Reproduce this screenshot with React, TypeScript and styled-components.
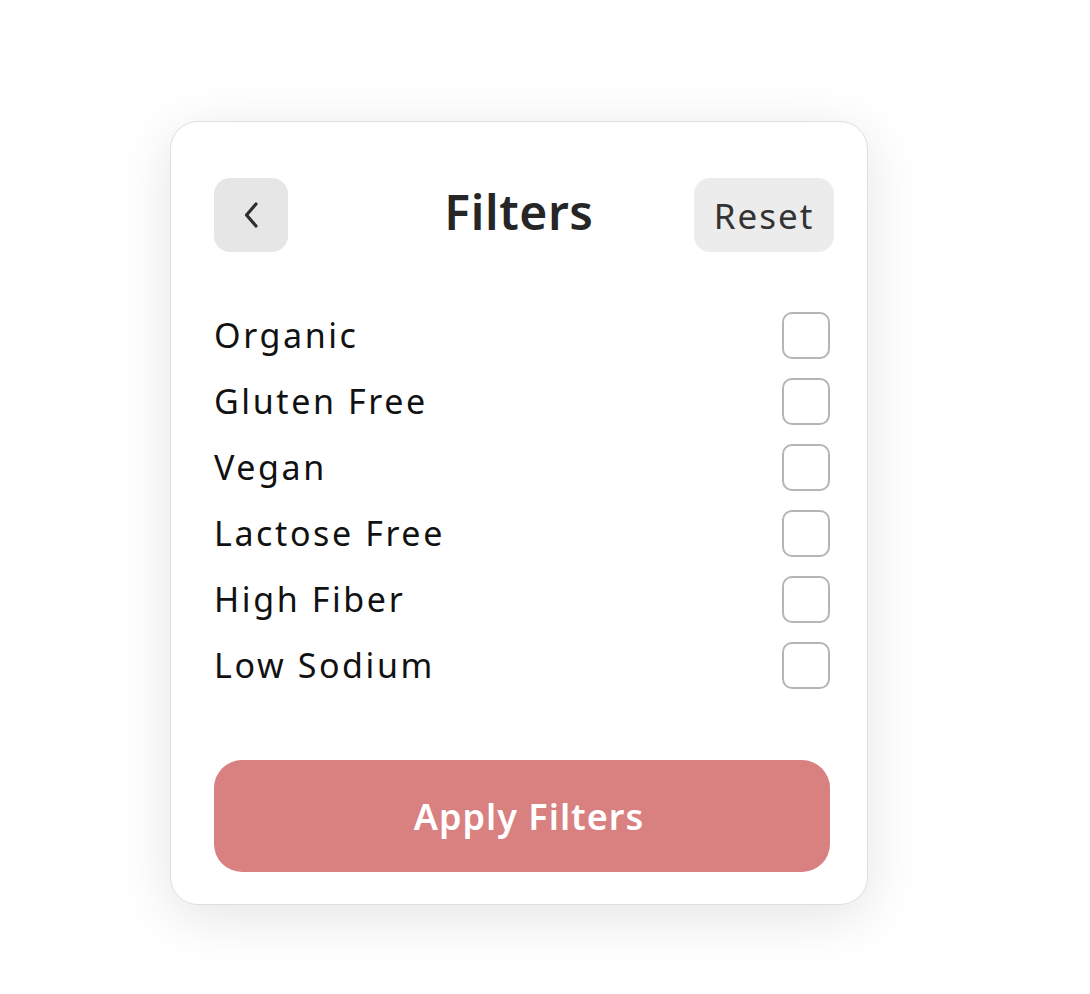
import React from "react";
import styled, { createGlobalStyle } from "styled-components";

const GlobalStyle = createGlobalStyle`
  *, *::before, *::after {
    box-sizing: border-box;
  }

  body {
    margin: 0;
    background: #ffffff;
    font-family: "Noto Sans", "Open Sans", sans-serif;
  }
`;

const Page = styled.div`
  min-height: 994px;
  padding: 121px 0 0 170px;
`;

const Card = styled.div`
  width: 698px;
  padding: 56px 37px 32px 43px;
  background: #ffffff;
  border: 1px solid #e2dddd;
  border-radius: 28px;
  box-shadow: 0 12px 56px rgba(0, 0, 0, 0.11);
`;

const Header = styled.div`
  display: grid;
  grid-template-columns: 1fr auto 1fr;
  align-items: center;
  margin-right: -4px;
`;

const BackButton = styled.button`
  justify-self: start;
  width: 74px;
  height: 74px;
  display: flex;
  align-items: center;
  justify-content: center;
  border: none;
  border-radius: 16px;
  background: #e6e6e6;
  padding: 0;
  cursor: pointer;
`;

const Title = styled.h1`
  margin: 0 10px 6px 0;
  font-size: 48px;
  font-weight: 600;
  letter-spacing: 0.6px;
  color: #262626;
  line-height: 1;
`;

const ResetButton = styled.button`
  justify-self: end;
  width: 140px;
  height: 74px;
  border: none;
  border-radius: 16px;
  background: #ececec;
  color: #333333;
  font-family: inherit;
  font-size: 35px;
  letter-spacing: 2px;
  cursor: pointer;
`;

const List = styled.div`
  display: flex;
  flex-direction: column;
  gap: 19px;
  margin-top: 60px;
`;

const Row = styled.label`
  display: flex;
  align-items: center;
  justify-content: space-between;
  height: 47px;
  cursor: pointer;
`;

const Label = styled.span`
  font-size: 34px;
  letter-spacing: 2.6px;
  color: #111111;
  margin-top: -2px;
`;

const Box = styled.span`
  width: 48px;
  height: 47px;
  border: 2px solid #b5b5b5;
  border-radius: 10px;
  background: #ffffff;
`;

const ApplyButton = styled.button`
  display: block;
  width: 100%;
  height: 112px;
  margin-top: 71px;
  padding: 0 0 0 14px;
  border: none;
  border-radius: 28px;
  background: #d98080;
  color: #ffffff;
  font-family: inherit;
  font-size: 36px;
  font-weight: 600;
  letter-spacing: 1px;
  cursor: pointer;
`;

const filters = [
  "Organic",
  "Gluten Free",
  "Vegan",
  "Lactose Free",
  "High Fiber",
  "Low Sodium",
];

const App: React.FC = () => {
  return (
    <>
      <GlobalStyle />
      <Page>
        <Card>
          <Header>
            <BackButton aria-label="Back">
              <svg width="16" height="28" viewBox="0 0 16 28" fill="none">
                <path
                  d="M13 3 L3.5 14 L13 25"
                  stroke="#2e2e2e"
                  strokeWidth="3.2"
                  strokeLinecap="round"
                  strokeLinejoin="round"
                />
              </svg>
            </BackButton>
            <Title>Filters</Title>
            <ResetButton>Reset</ResetButton>
          </Header>
          <List>
            {filters.map((name) => (
              <Row key={name}>
                <Label>{name}</Label>
                <Box />
              </Row>
            ))}
          </List>
          <ApplyButton>Apply Filters</ApplyButton>
        </Card>
      </Page>
    </>
  );
};

export default App;
